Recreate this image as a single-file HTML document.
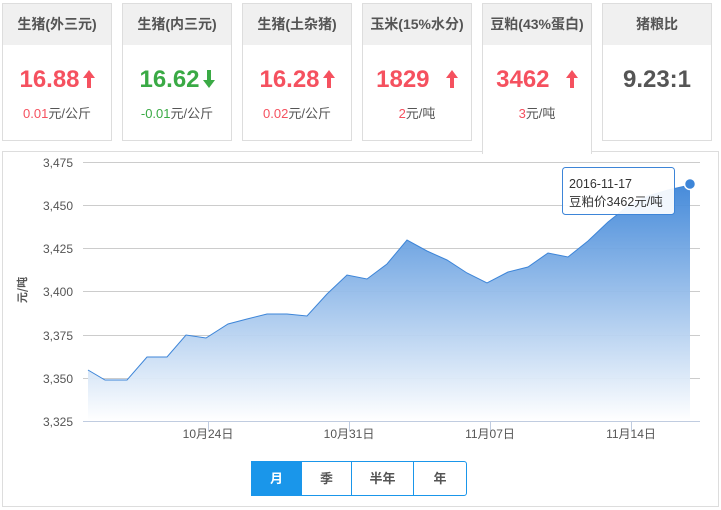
<!DOCTYPE html>
<html><head><meta charset="utf-8"><style>
body{margin:0;width:721px;height:510px;background:#fff;font-family:"Liberation Sans","Noto Sans CJK SC",sans-serif;position:relative;overflow:hidden}
.card{position:absolute;top:3px;width:108px;height:136px;border:1px solid #ddd;background:#fff;text-align:center}
.card .h{height:41px;background:#f0f0f0;line-height:41px;font-size:14px;font-weight:bold;color:#555}
.card .v{margin-top:20px;font-size:24px;font-weight:bold;line-height:30px}
.card .v svg{vertical-align:-1px;margin-left:3px}
.card .s{margin-top:8px;font-size:13px;color:#555}
.r{color:#f5515f}.g{color:#3aaa45}
.chart{position:absolute;left:2px;top:151px;width:715px;height:354px;border:1px solid #ddd}
.btns{position:absolute;top:461px;left:251px;height:33px;display:flex;border:1px solid #1a96ea;border-radius:0 3px 3px 0}
.btns div{height:33px;line-height:33px;text-align:center;font-size:13px;font-weight:bold;color:#555;border-left:1px solid #1a96ea}
</style></head><body>
<div class="card" style="left:2px"><div class="h">生猪(外三元)</div><div class="v r">16.88<svg width="12" height="18" viewBox="0 0 12 18"><path d="M6,0 L12,8 L8,8 L8,18 L4,18 L4,8 L0,8Z" fill="#f5515f"/></svg></div><div class="s"><span class="r">0.01</span>元/公斤</div></div>
<div class="card" style="left:122px"><div class="h">生猪(内三元)</div><div class="v g">16.62<svg width="12" height="18" viewBox="0 0 12 18"><path d="M6,18 L12,10 L8,10 L8,0 L4,0 L4,10 L0,10Z" fill="#3aaa45"/></svg></div><div class="s"><span class="g">-0.01</span>元/公斤</div></div>
<div class="card" style="left:242px"><div class="h">生猪(土杂猪)</div><div class="v r">16.28<svg width="12" height="18" viewBox="0 0 12 18"><path d="M6,0 L12,8 L8,8 L8,18 L4,18 L4,8 L0,8Z" fill="#f5515f"/></svg></div><div class="s"><span class="r">0.02</span>元/公斤</div></div>
<div class="card" style="left:362px"><div class="h">玉米(15%水分)</div><div class="v r">1829 &nbsp;<svg width="12" height="18" viewBox="0 0 12 18"><path d="M6,0 L12,8 L8,8 L8,18 L4,18 L4,8 L0,8Z" fill="#f5515f"/></svg></div><div class="s"><span class="r">2</span>元/吨</div></div>
<div class="chart"></div>
<div class="card" style="left:482px;height:150px;border-bottom:none;z-index:2"><div class="h">豆粕(43%蛋白)</div><div class="v r">3462 &nbsp;<svg width="12" height="18" viewBox="0 0 12 18"><path d="M6,0 L12,8 L8,8 L8,18 L4,18 L4,8 L0,8Z" fill="#f5515f"/></svg></div><div class="s"><span class="r">3</span>元/吨</div></div>
<div class="card" style="left:602px"><div class="h">猪粮比</div><div class="v" style="color:#555">9.23:1</div></div>
<svg style="position:absolute;left:0;top:0" width="721" height="510">
<defs><linearGradient id="gr" x1="0" y1="0" x2="0" y2="1"><stop offset="0" stop-color="#3d85d8"/><stop offset="1" stop-color="#fff"/></linearGradient></defs>
<g stroke="#ccc" stroke-width="1">
<line x1="83" x2="700" y1="162.5" y2="162.5"/><line x1="83" x2="700" y1="205.5" y2="205.5"/><line x1="83" x2="700" y1="248.5" y2="248.5"/><line x1="83" x2="700" y1="291.5" y2="291.5"/><line x1="83" x2="700" y1="335.5" y2="335.5"/><line x1="83" x2="700" y1="378.5" y2="378.5"/></g>
<path d="M88,370 L105,380 L127,380 L147,357 L167,357 L186,335 L206,338 L228,324 L247,319 L267,314 L287,314 L307,316 L327,294 L347,275 L367,279 L387,264 L407,240 L427,251 L447,260 L467,273 L487,283 L508,272 L528,267 L548,253 L568,257 L588,241 L608,222 L628,206 L648,196 L668,190 L690,185 L690,421 L88,421Z" fill="url(#gr)" opacity="0.95"/>
<path d="M88,370 L105,380 L127,380 L147,357 L167,357 L186,335 L206,338 L228,324 L247,319 L267,314 L287,314 L307,316 L327,294 L347,275 L367,279 L387,264 L407,240 L427,251 L447,260 L467,273 L487,283 L508,272 L528,267 L548,253 L568,257 L588,241 L608,222 L628,206 L648,196 L668,190 L690,185" fill="none" stroke="#3d85d8" stroke-width="1"/>
<line x1="83" x2="700" y1="421.5" y2="421.5" stroke="#c0cce0"/>
<g stroke="#c0cce0"><line x1="208.5" x2="208.5" y1="421" y2="431"/><line x1="349.5" x2="349.5" y1="421" y2="431"/><line x1="490.5" x2="490.5" y1="421" y2="431"/><line x1="631.5" x2="631.5" y1="421" y2="431"/></g>
<circle cx="690" cy="184" r="5.5" fill="#3d85d8" stroke="#fff" stroke-width="1.5"/>
<g font-size="12" fill="#555" text-anchor="end" font-family="Liberation Sans,sans-serif">
<text x="73" y="167">3,475</text><text x="73" y="210">3,450</text><text x="73" y="253">3,425</text><text x="73" y="296">3,400</text><text x="73" y="340">3,375</text><text x="73" y="383">3,350</text><text x="73" y="426">3,325</text></g>
<g font-size="12" fill="#555" text-anchor="middle" font-family="Liberation Sans,Noto Sans CJK SC,sans-serif">
<text x="208" y="438">10月24日</text><text x="349" y="438">10月31日</text><text x="490" y="438">11月07日</text><text x="631" y="438">11月14日</text></g>
<text transform="translate(26,290) rotate(-90)" text-anchor="middle" font-size="11" font-weight="bold" fill="#555" font-family="Noto Sans CJK SC,sans-serif">元/吨</text>
<rect x="562.5" y="167.5" width="112" height="47" rx="3" fill="#fff" fill-opacity="0.92" stroke="#3d85d8"/>
<text x="569" y="188" font-size="12.5" fill="#333" font-family="Liberation Sans,Noto Sans CJK SC,sans-serif">2016-11-17</text>
<text x="569" y="206" font-size="12.5" fill="#333" font-family="Liberation Sans,Noto Sans CJK SC,sans-serif">豆粕价3462元/吨</text>
</svg>
<div class="btns"><div style="width:49px;background:#1a96ea;color:#fff;border-left:none">月</div><div style="width:49px">季</div><div style="width:61px">半年</div><div style="width:52px">年</div></div>
</body></html>
